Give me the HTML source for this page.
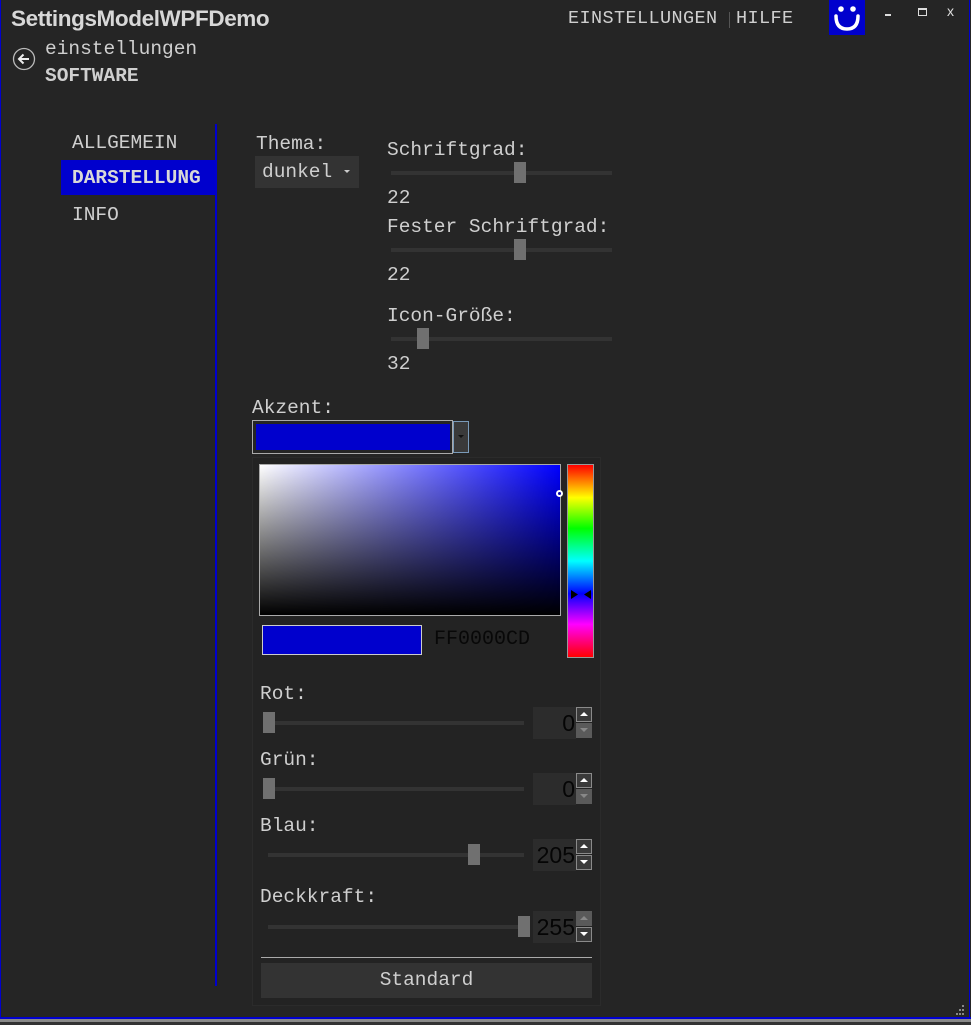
<!DOCTYPE html>
<html><head><meta charset="utf-8">
<style>
*{margin:0;padding:0;box-sizing:border-box}
html,body{width:971px;height:1025px;overflow:hidden;background:#252525}
body{position:relative;font-family:"Liberation Mono",monospace;color:#cfcfcf}
.a{position:absolute;white-space:nowrap}
.t{font-size:19.5px;line-height:20px}
.track{position:absolute;height:4px;background:#333}
.thumb{position:absolute;width:12px;height:21px;background:#707070}
.num{position:absolute;width:43px;height:32px;background:#2c2c2c;color:#050505;font-family:"Liberation Sans",sans-serif;font-size:23px;text-align:right;line-height:32px;padding-right:1px}
.sp{position:absolute;width:16px;height:15px;border:1px solid #8a8a8a;background:#3a3a3a}
.sp.d{background:#5a5a5a;border-color:#5a5a5a}
.sp svg{position:absolute;left:3px;top:4px}
</style></head><body>
<div class="a" style="left:0;top:0;width:1px;height:1020px;background:#0000cd"></div>
<div class="a" style="left:969px;top:0;width:1px;height:1020px;background:#0000cd"></div>
<div class="a" style="left:0;top:1017px;width:971px;height:2px;background:#0000cd"></div>
<div class="a" style="left:0;top:1019px;width:971px;height:3px;background:#8a8a8a"></div>
<div class="a" style="left:0;top:1022px;width:971px;height:3px;background:#333"></div>

<div class="a" style="left:11px;top:6px;font-family:'Liberation Sans',sans-serif;font-weight:bold;font-size:22.5px;color:#d8d8d8;letter-spacing:-0.4px">SettingsModelWPFDemo</div>
<div class="a t" style="left:568px;top:9px;font-size:18.5px;letter-spacing:0.4px">EINSTELLUNGEN</div>
<div class="a" style="left:729px;top:12px;width:1px;height:16px;background:#555"></div>
<div class="a t" style="left:736px;top:9px;font-size:18.5px;letter-spacing:0.4px">HILFE</div>
<div class="a" style="left:829px;top:0;width:36px;height:35px;background:#0000cd">
<svg width="36" height="35"><circle cx="12" cy="9" r="2.8" fill="#fff"/><circle cx="24" cy="9" r="2.8" fill="#fff"/><path d="M7 16 Q7 29 18 29 Q29 29 29 16" stroke="#fff" stroke-width="3.5" fill="none" stroke-linecap="round"/></svg></div>
<div class="a" style="left:885px;top:14px;width:6px;height:2px;background:#ddd"></div>
<div class="a" style="left:918px;top:8px;width:9px;height:8px;border:1.5px solid #ddd;border-top-width:2px"></div>
<div class="a" style="left:947px;top:3px;font-family:'Liberation Sans',sans-serif;font-size:14px;color:#ddd">x</div>

<svg class="a" style="left:12px;top:47px" width="24" height="24"><circle cx="12" cy="12" r="10.5" stroke="#bbb" stroke-width="1.3" fill="none"/><path d="M17 12H7M11.5 7.5 7 12l4.5 4.5" stroke="#eee" stroke-width="2" fill="none"/></svg>
<div class="a t" style="left:45px;top:39px;font-size:19.5px">einstellungen</div>
<div class="a t" style="left:45px;top:66px;font-size:19.5px;font-weight:bold">SOFTWARE</div>

<div class="a t" style="left:72px;top:133px">ALLGEMEIN</div>
<div class="a" style="left:61px;top:160px;width:155px;height:35px;background:#0000cd"></div>
<div class="a t" style="left:72px;top:168px;font-weight:bold;color:#d8d8d8">DARSTELLUNG</div>
<div class="a t" style="left:72px;top:205px">INFO</div>
<div class="a" style="left:215px;top:124px;width:2px;height:862px;background:#0000cd"></div>

<div class="a t" style="left:256px;top:134px">Thema:</div>
<div class="a" style="left:255px;top:156px;width:104px;height:32px;background:#333"></div>
<div class="a t" style="left:262px;top:162px">dunkel</div>
<svg class="a" style="left:343px;top:169px" width="8" height="5"><path d="M1 1h6l-3 3z" fill="#ccc"/></svg>

<div class="a t" style="left:387px;top:140px">Schriftgrad:</div>
<div class="track" style="left:391px;top:171px;width:221px"></div>
<div class="thumb" style="left:514px;top:162px"></div>
<div class="a t" style="left:387px;top:188px">22</div>
<div class="a t" style="left:387px;top:217px">Fester Schriftgrad:</div>
<div class="track" style="left:391px;top:248px;width:221px"></div>
<div class="thumb" style="left:514px;top:239px"></div>
<div class="a t" style="left:387px;top:265px">22</div>
<div class="a t" style="left:387px;top:306px">Icon-Größe:</div>
<div class="track" style="left:391px;top:337px;width:221px"></div>
<div class="thumb" style="left:417px;top:328px"></div>
<div class="a t" style="left:387px;top:354px">32</div>

<div class="a t" style="left:252px;top:398px">Akzent:</div>
<div class="a" style="left:252px;top:420px;width:201px;height:34px;border:1.5px solid #aaa;background:#252525"></div>
<div class="a" style="left:256px;top:424px;width:194px;height:26px;background:#0000cd"></div>
<div class="a" style="left:453px;top:421px;width:16px;height:32px;background:#3a3a3a;border:1px solid #7a9ab8"></div>
<svg class="a" style="left:457px;top:434px" width="8" height="5"><path d="M1 1h6l-3 3z" fill="#111"/></svg>

<div class="a" style="left:252px;top:457px;width:349px;height:549px;background:#232323;border:1px solid #2b2b2b"></div>
<div class="a" style="left:259px;top:464px;width:302px;height:152px;border:1px solid #aaa;background:linear-gradient(to bottom,rgba(0,0,0,0),#000),linear-gradient(to right,#fff,#0000ff)"></div>
<div class="a" style="left:556px;top:490px;width:7px;height:7px;border-radius:50%;border:2px solid #fff;background:#0000aa"></div>
<div class="a" style="left:567px;top:464px;width:27px;height:194px;border:1px solid #999;background:linear-gradient(to bottom,#f00,#ff0 17%,#0f0 33%,#0ff 50%,#00f 67%,#f0f 83%,#f00)"></div>
<svg class="a" style="left:570px;top:589px" width="22" height="11"><path d="M1 1l7 4.5L1 10zM21 1l-7 4.5 7 4.5z" fill="#000"/></svg>
<div class="a" style="left:262px;top:625px;width:160px;height:30px;background:#0000cd;border:1px solid #ccc"></div>
<div class="a" style="left:434px;top:628px;font-family:'Liberation Mono',monospace;font-size:20px;color:#080808">FF0000CD</div>

<div class="a t" style="left:260px;top:684px">Rot:</div>
<div class="track" style="left:263px;top:721px;width:261px"></div>
<div class="thumb" style="left:263px;top:712px"></div>
<div class="num" style="left:533px;top:707px">0</div>
<div class="sp" style="left:576px;top:707px"><svg width="8" height="5"><path d="M0 4l4-4 4 4z" fill="#fff"/></svg></div>
<div class="sp d" style="left:576px;top:723px"><svg width="8" height="5"><path d="M0 0h8l-4 4z" fill="#888"/></svg></div>

<div class="a t" style="left:260px;top:750px">Grün:</div>
<div class="track" style="left:263px;top:787px;width:261px"></div>
<div class="thumb" style="left:263px;top:778px"></div>
<div class="num" style="left:533px;top:773px">0</div>
<div class="sp" style="left:576px;top:773px"><svg width="8" height="5"><path d="M0 4l4-4 4 4z" fill="#fff"/></svg></div>
<div class="sp d" style="left:576px;top:789px"><svg width="8" height="5"><path d="M0 0h8l-4 4z" fill="#888"/></svg></div>

<div class="a t" style="left:260px;top:816px">Blau:</div>
<div class="track" style="left:268px;top:853px;width:256px"></div>
<div class="thumb" style="left:468px;top:844px"></div>
<div class="num" style="left:533px;top:839px">205</div>
<div class="sp" style="left:576px;top:839px"><svg width="8" height="5"><path d="M0 4l4-4 4 4z" fill="#fff"/></svg></div>
<div class="sp" style="left:576px;top:855px"><svg width="8" height="5"><path d="M0 0h8l-4 4z" fill="#fff"/></svg></div>

<div class="a t" style="left:260px;top:887px">Deckkraft:</div>
<div class="track" style="left:268px;top:925px;width:256px"></div>
<div class="thumb" style="left:518px;top:916px"></div>
<div class="num" style="left:533px;top:911px">255</div>
<div class="sp d" style="left:576px;top:911px"><svg width="8" height="5"><path d="M0 4l4-4 4 4z" fill="#888"/></svg></div>
<div class="sp" style="left:576px;top:927px"><svg width="8" height="5"><path d="M0 0h8l-4 4z" fill="#fff"/></svg></div>

<div class="a" style="left:261px;top:957px;width:331px;height:1px;background:#aaa"></div>
<div class="a" style="left:261px;top:963px;width:331px;height:35px;background:#333;text-align:center;line-height:35px;font-size:19.5px">Standard</div>

<svg class="a" style="left:953px;top:1005px" width="12" height="12"><g fill="#888"><rect x="9" y="0" width="2" height="2"/><rect x="6" y="4" width="2" height="2"/><rect x="9" y="4" width="2" height="2"/><rect x="3" y="8" width="2" height="2"/><rect x="6" y="8" width="2" height="2"/><rect x="9" y="8" width="2" height="2"/></g></svg>
</body></html>
